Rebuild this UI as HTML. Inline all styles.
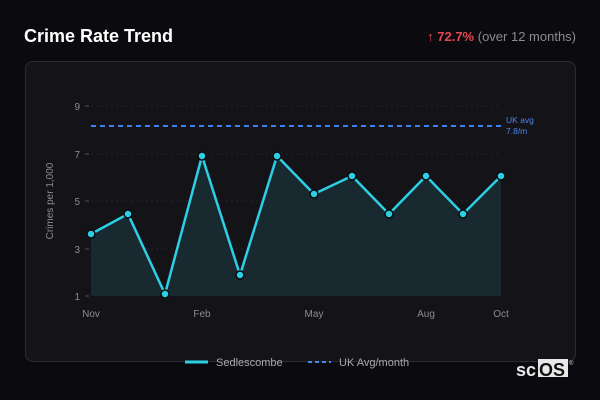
<html><head><style>
body{margin:0;width:600px;height:400px;background:#0b0b0f;font-family:"Liberation Sans",sans-serif;position:relative;overflow:hidden}
.t{position:absolute;left:24px;top:26px;color:#fff;font-weight:bold;font-size:18px}
.r{position:absolute;right:24px;top:29px;font-size:13px;color:#8a8a92}
.r b{color:#e5484d}
.card{position:absolute;left:25px;top:61px;width:549px;height:299px;background:#141418;border:1px solid #2c2c33;border-radius:8px}
</style></head><body>
<div class="t">Crime Rate Trend</div>
<div class="r"><b>↑ 72.7%</b> (over 12 months)</div>
<div class="card"></div>
<svg width="600" height="400" style="position:absolute;left:0;top:0" font-family="Liberation Sans,sans-serif">
<g stroke="#222228" stroke-dasharray="2,3"><line x1="91" y1="106" x2="501" y2="106"/><line x1="91" y1="154" x2="501" y2="154"/><line x1="91" y1="201" x2="501" y2="201"/><line x1="91" y1="249" x2="501" y2="249"/></g>
<g fill="#8a8a92" font-size="10" text-anchor="end"><text x="80" y="110">9</text><text x="80" y="158">7</text><text x="80" y="205">5</text><text x="80" y="253">3</text><text x="80" y="300">1</text></g>
<g stroke="#555" ><line x1="85" y1="106" x2="89" y2="106"/><line x1="85" y1="154" x2="89" y2="154"/><line x1="85" y1="201" x2="89" y2="201"/><line x1="85" y1="249" x2="89" y2="249"/><line x1="85" y1="296" x2="89" y2="296"/></g>
<text x="53" y="201" fill="#8a8a92" font-size="10" text-anchor="middle" transform="rotate(-90 53 201)">Crimes per 1,000</text>
<g fill="#8a8a92" font-size="10" text-anchor="middle"><text x="91" y="317">Nov</text><text x="202" y="317">Feb</text><text x="314" y="317">May</text><text x="426" y="317">Aug</text><text x="501" y="317">Oct</text></g>
<polygon fill="#18292f" points="91,296 91,234 128,214 165,294 202,156 240,275 277,156 314,194 352,176 389,214 426,176 463,214 501,176 501,296"/>
<line x1="91" y1="126" x2="501" y2="126" stroke="#3b82f6" stroke-width="2" stroke-dasharray="5,4"/>
<text x="506" y="123" fill="#4a86e8" font-size="8.5">UK avg</text><text x="506" y="134" fill="#4a86e8" font-size="8.5">7.8/m</text>
<polyline fill="none" stroke="#2dcfe6" stroke-width="2.5" stroke-linejoin="round" points="91,234 128,214 165,294 202,156 240,275 277,156 314,194 352,176 389,214 426,176 463,214 501,176"/>
<g fill="#2dcfe6" stroke="#0b0b0f" stroke-width="1.5"><circle cx="91" cy="234" r="4"/><circle cx="128" cy="214" r="4"/><circle cx="165" cy="294" r="4"/><circle cx="202" cy="156" r="4"/><circle cx="240" cy="275" r="4"/><circle cx="277" cy="156" r="4"/><circle cx="314" cy="194" r="4"/><circle cx="352" cy="176" r="4"/><circle cx="389" cy="214" r="4"/><circle cx="426" cy="176" r="4"/><circle cx="463" cy="214" r="4"/><circle cx="501" cy="176" r="4"/></g>
<line x1="185" y1="362" x2="208" y2="362" stroke="#2dcfe6" stroke-width="3"/>
<text x="216" y="366" fill="#aaa" font-size="11">Sedlescombe</text>
<line x1="308" y1="362" x2="331" y2="362" stroke="#4a86e8" stroke-width="2" stroke-dasharray="4,3"/>
<text x="339" y="366" fill="#aaa" font-size="11">UK Avg/month</text>
<rect x="538" y="359" width="30" height="18" fill="#e8e8e8"/>
<text x="516" y="376" fill="#e8e8e8" font-size="18" font-weight="bold">sc</text>
<text x="539" y="376" fill="#111" font-size="18" font-weight="bold">OS</text>
<text x="569" y="365" fill="#ccc" font-size="6">®</text>
</svg>
</body></html>
